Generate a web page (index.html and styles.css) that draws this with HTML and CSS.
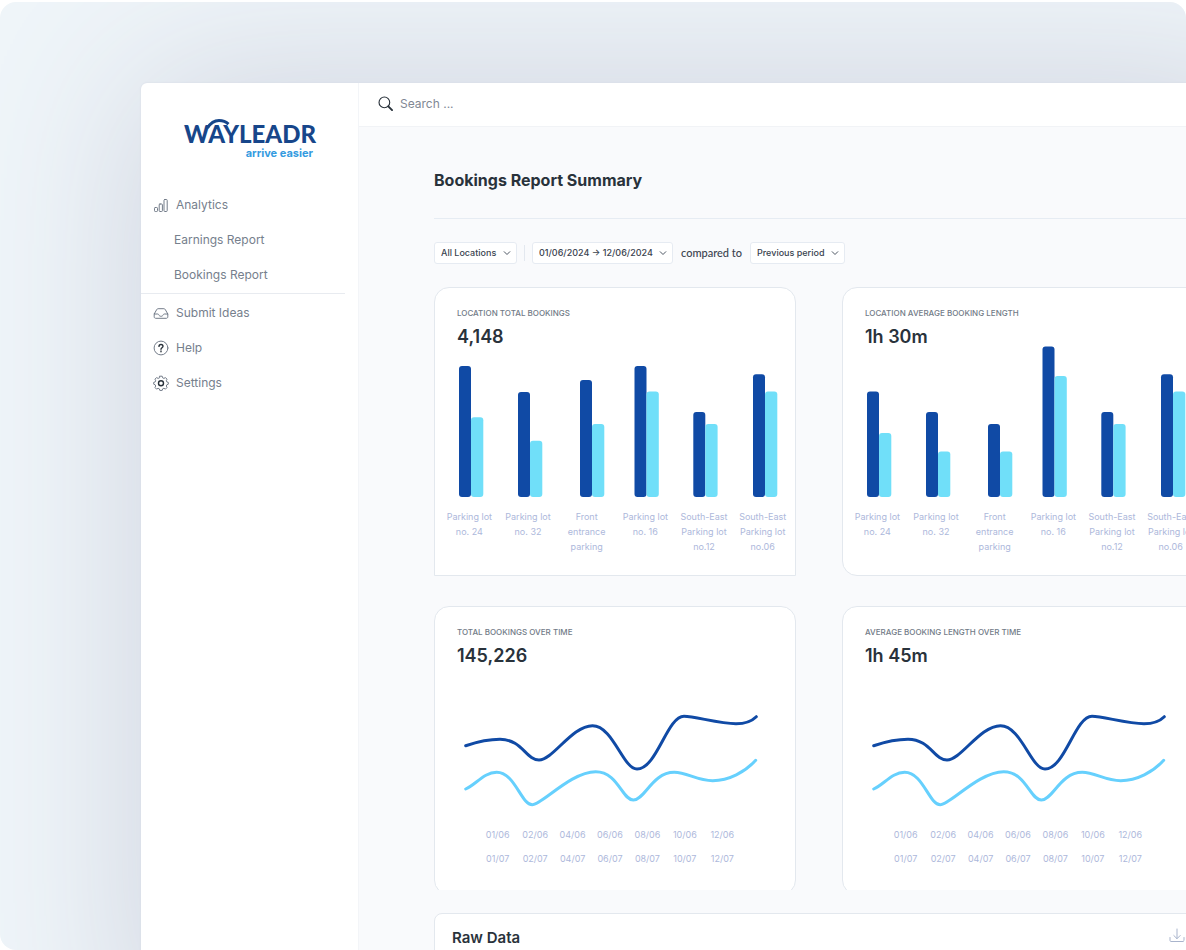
FILE: index.html
```html
<!DOCTYPE html>
<html lang="en">
<head>
<meta charset="utf-8">
<title>Wayleadr – Bookings Report Summary</title>
<link rel="stylesheet" href="styles.css">
</head>
<body>
<div class="canvas">
  <div class="app">
    <aside class="sidebar">
      <div class="logo">
        <span class="logo-name">WAYLEADR</span>
        <svg class="logo-arc" viewBox="0 0 38 26" aria-hidden="true"><path d="M6.500 10C9.500 5 13 2.500 18 2.500c4 0 7 1.200 9.500 3.600"/></svg>
        <span class="logo-tag">arrive easier</span>
      </div>
      <nav class="nav">
        <a class="nav-item" href="#">
          <svg class="icon" viewBox="0 0 16 16"><rect x="1.500" y="10.500" width="3" height="4" rx=".8"/><rect x="6.200" y="7" width="3.200" height="7.500" rx=".8"/><rect x="11" y="2.500" width="3.200" height="12" rx=".8"/></svg>
          Analytics</a>
        <a class="nav-item nav-sub" href="#">Earnings Report</a>
        <a class="nav-item nav-sub" href="#">Bookings Report</a>
        <hr class="nav-rule">
        <a class="nav-item" href="#">
          <svg class="icon" viewBox="0 0 16 16"><path d="M1.200 9v2.800c0 .9.600 1.500 1.500 1.500h10.600c.9 0 1.500-.6 1.500-1.500V9L12.300 4.600c-.3-.6-.8-.9-1.400-.9H5.100c-.6 0-1.100.3-1.400.9L1.200 9h3.500c.5 0 .8.300 1 .7.400 1 1.300 1.600 2.300 1.600s1.900-.6 2.300-1.600c.2-.4.500-.7 1-.7h3.500"/></svg>
          Submit Ideas</a>
        <a class="nav-item" href="#">
          <svg class="icon" viewBox="0 0 16 16"><circle cx="8" cy="8" r="6.900"/><path class="strong" d="M6 6.400c0-1.200.9-1.900 2-1.900s2 .7 2 1.800c0 1.400-2 1.500-2 2.900M8 11v.7"/></svg>
          Help</a>
        <a class="nav-item" href="#">
          <svg class="icon" viewBox="0 0 16 16"><path d="M6.800 1.200h2.400l.5 1.700 1.200.5 1.600-.8 1.500 1.600-.7 1.600.5 1.100 1.500.5v1.800l-1.500.6-.5 1.200.7 1.500-1.500 1.600-1.600-.8-1.200.5-.5 1.600H6.800l-.5-1.600-1.200-.5-1.600.8L2 12.500l.7-1.500-.5-1.200-1.500-.6V7.400l1.500-.5.500-1.100L2 4.200l1.500-1.600 1.600.8 1.200-.5z"/><circle class="strong" cx="8" cy="8.300" r="2.500"/></svg>
          Settings</a>
      </nav>
    </aside>

    <div class="page">
      <header class="topbar">
        <label class="search">
          <svg class="search-icon" viewBox="0 0 16 16" role="img" aria-label="Search"><circle cx="6.800" cy="6.800" r="5.700"/><path d="M11 11l4 4"/></svg>
          <input class="search-input" type="search" placeholder="Search ...">
        </label>
      </header>

      <main class="main">
        <h1 class="title">Bookings Report Summary</h1>
        <form class="filters">
          <span class="select-box">
            <select class="select" aria-label="Locations"><option>All Locations</option></select>
            <svg class="chevron" viewBox="0 0 8 8"><path d="M1.200 2.700L4 5.500l2.800-2.800"/></svg>
          </span>
          <span class="divider"></span>
          <span class="select-box">
            <select class="select" aria-label="Date range"><option>01/06/2024 → 12/06/2024</option></select>
            <svg class="chevron" viewBox="0 0 8 8"><path d="M1.200 2.700L4 5.500l2.800-2.800"/></svg>
          </span>
          <label class="compare" for="period">compared to</label>
          <span class="select-box">
            <select class="select" id="period"><option>Previous period</option></select>
            <svg class="chevron" viewBox="0 0 8 8"><path d="M1.200 2.700L4 5.500l2.800-2.800"/></svg>
          </span>
        </form>

        <div class="cards">
          <section class="card card-square">
            <h2 class="card-label">Location total bookings</h2>
            <p class="card-value">4,148</p>
            <svg class="bars" viewBox="0 0 360 152">
              <g class="now"><rect x="24" y="21" width="12" height="131" rx="3"/><rect x="83" y="47" width="12" height="105" rx="3"/><rect x="145" y="35" width="12" height="117" rx="3"/><rect x="199.500" y="21" width="12" height="131" rx="3"/><rect x="258.300" y="67" width="12" height="85" rx="3"/><rect x="318" y="29.300" width="12" height="122.700" rx="3"/></g>
              <g class="before"><rect x="36" y="72.300" width="12.300" height="79.700" rx="3"/><rect x="95" y="95.700" width="12.300" height="56.300" rx="3"/><rect x="157" y="79" width="12.300" height="73" rx="3"/><rect x="211.500" y="46.500" width="12.300" height="105.500" rx="3"/><rect x="270.300" y="79" width="12.300" height="73" rx="3"/><rect x="330" y="46.500" width="12.300" height="105.500" rx="3"/></g>
            </svg>
            <ul class="bar-labels"><li>Parking lot<br>no. 24</li><li>Parking lot<br>no. 32</li><li>Front<br>entrance<br>parking</li><li>Parking lot<br>no. 16</li><li>South-East<br>Parking lot<br>no.12</li><li>South-East<br>Parking lot<br>no.06</li></ul>
          </section>

          <section class="card">
            <h2 class="card-label">Location average booking length</h2>
            <p class="card-value">1h 30m</p>
            <svg class="bars" viewBox="0 0 360 152">
              <g class="now"><rect x="24" y="46.500" width="12" height="105.500" rx="3"/><rect x="83" y="67" width="12" height="85" rx="3"/><rect x="145" y="79" width="12" height="73" rx="3"/><rect x="199.500" y="1.500" width="12" height="150.500" rx="3"/><rect x="258.300" y="67" width="12" height="85" rx="3"/><rect x="318" y="29.300" width="12" height="122.700" rx="3"/></g>
              <g class="before"><rect x="36" y="88" width="12.300" height="64" rx="3"/><rect x="95" y="106.500" width="12.300" height="45.500" rx="3"/><rect x="157" y="106.500" width="12.300" height="45.500" rx="3"/><rect x="211.500" y="31" width="12.300" height="121" rx="3"/><rect x="270.300" y="79" width="12.300" height="73" rx="3"/><rect x="330" y="46.500" width="12.300" height="105.500" rx="3"/></g>
            </svg>
            <ul class="bar-labels"><li>Parking lot<br>no. 24</li><li>Parking lot<br>no. 32</li><li>Front<br>entrance<br>parking</li><li>Parking lot<br>no. 16</li><li>South-East<br>Parking lot<br>no.12</li><li>South-East<br>Parking lot<br>no.06</li></ul>
          </section>
        </div>

        <div class="cards cards-cut">
          <section class="card">
            <h2 class="card-label">Total bookings over time</h2>
            <p class="card-value">145,226</p>
            <svg class="lines" viewBox="0 0 360 120">
              <path class="line-now" d="M30.700 45.700C42 42 53 39.300 65 39.300C87 39.300 91 60 104 60C118 60 137 25.700 157.500 25.700C178 25.700 188 69 202 69C222 69 232 16.300 249 16.300C260 16.300 284 23.700 301 23.700C312 23.700 317 21 321.300 16.700"/>
              <path class="line-before" d="M30.700 89C41 84.500 49 72.300 61.700 72.300C80 72.300 86 104.700 97.300 104.700C107 104.700 136 71.700 160.700 71.700C183 71.700 187 100 198.300 100C210 100 217 72.300 239.300 72.300C252 72.300 262 80.700 277.700 80.700C294 80.700 310 72 320.700 60.300"/>
            </svg>
            <ul class="dates"><li>01/06</li><li>02/06</li><li>04/06</li><li>06/06</li><li>08/06</li><li>10/06</li><li>12/06</li><li>01/07</li><li>02/07</li><li>04/07</li><li>06/07</li><li>08/07</li><li>10/07</li><li>12/07</li></ul>
          </section>

          <section class="card">
            <h2 class="card-label">Average booking length over time</h2>
            <p class="card-value">1h 45m</p>
            <svg class="lines" viewBox="0 0 360 120">
              <path class="line-now" d="M30.700 45.700C42 42 53 39.300 65 39.300C87 39.300 91 60 104 60C118 60 137 25.700 157.500 25.700C178 25.700 188 69 202 69C222 69 232 16.300 249 16.300C260 16.300 284 23.700 301 23.700C312 23.700 317 21 321.300 16.700"/>
              <path class="line-before" d="M30.700 89C41 84.500 49 72.300 61.700 72.300C80 72.300 86 104.700 97.300 104.700C107 104.700 136 71.700 160.700 71.700C183 71.700 187 100 198.300 100C210 100 217 72.300 239.300 72.300C252 72.300 262 80.700 277.700 80.700C294 80.700 310 72 320.700 60.300"/>
            </svg>
            <ul class="dates"><li>01/06</li><li>02/06</li><li>04/06</li><li>06/06</li><li>08/06</li><li>10/06</li><li>12/06</li><li>01/07</li><li>02/07</li><li>04/07</li><li>06/07</li><li>08/07</li><li>10/07</li><li>12/07</li></ul>
          </section>
        </div>

        <section class="raw">
          <h2 class="raw-title">Raw Data</h2>
          <button class="download" type="button" aria-label="Download raw data">
            <svg class="download-icon" viewBox="0 0 16 16"><path d="M8 1v9.500M4.800 7.500L8 10.700l3.200-3.200M1 9.500v3c0 .6.400 1 1 1h12c.6 0 1-.4 1-1v-3"/></svg>
          </button>
        </section>
      </main>
    </div>
  </div>
</div>
</body>
</html>
```
FILE: styles.css
```css
* { box-sizing: border-box; }

body {
  margin: 0;
  background: #fff;
  font-family: Inter, "Liberation Sans", sans-serif;
  color: #29323b;
}

h1, h2, p, ul { margin: 0; padding: 0; }
ul { list-style: none; }

.canvas {
  height: calc(100vh - 2px);
  margin-top: 2px;
  padding: 81px 0 0 141px;
  border-radius: 16px;
  overflow: hidden;
  background: #eff5f9;
}

/* The dashboard runs past the right and bottom edges of the canvas. */
.app {
  display: flex;
  min-height: calc(100% + 100px);
  margin-right: -94px;
  border-radius: 6px 0 0 0;
  background: #fff;
  box-shadow: 0 0 2px #d3d9e3, 0 0 170px #ced2de;
}

.sidebar {
  flex: 0 0 218px;
  border-right: 1px solid #f3f5f8;
}

.logo {
  position: relative;
  display: flex;
  flex-direction: column;
  align-items: flex-end;
  width: 175px;
  padding-top: 38px;
  height: 104px;
}
.logo-arc {
  position: absolute;
  left: 60px;
  top: 35px;
  width: 38px;
  height: 26px;
  fill: none;
  stroke: #17468a;
  stroke-width: 3;
}
.logo-name {
  font: 900 24px/26px Lato, sans-serif;
  color: #17468a;
}
.logo-tag {
  padding-right: 3px;
  font-size: 11px;
  line-height: 12px;
  font-weight: 700;
  color: #359bdf;
}

.nav { padding-left: 12px; }
.nav-item {
  display: flex;
  align-items: center;
  gap: 7px;
  height: 35px;
  font-size: 12px;
  color: #76808d;
  text-decoration: none;
}
.nav-sub { padding-left: 21px; }
.nav-rule {
  margin: 1px 13px 1px -12px;
  border: 0;
  border-top: 1px solid #e8ebf0;
}
.icon {
  width: 16px;
  height: 16px;
  fill: none;
  stroke: #737c89;
  stroke-width: 1;
  stroke-linejoin: round;
  stroke-linecap: round;
}
.icon .strong { stroke: #29323b; stroke-width: 1.400; }

.page { flex: 1; min-width: 0; display: flex; flex-direction: column; }
.topbar {
  display: flex;
  align-items: center;
  height: 44px;
  padding: 0 0 2px 19px;
  border-bottom: 1px solid #f1f3f6;
}
.search { display: flex; align-items: center; gap: 7px; }
.search-icon {
  width: 15px;
  height: 15px;
  fill: none;
  stroke: #29323b;
  stroke-width: 1.200;
  stroke-linecap: round;
}
.search-icon path { stroke-width: 2; }
.search-input {
  padding: 0;
  border: 0;
  outline: 0;
  background: none;
  font: 12px/18px Inter, sans-serif;
  color: #29323b;
}
.search-input::placeholder { color: #818894; }

.main {
  flex: 1;
  padding: 43px 76px 0 75px;
  background: #f9fafc;
}
.title {
  padding-bottom: 28px;
  border-bottom: 1px solid #e6ecf3;
  font-size: 16px;
  line-height: 20px;
  font-weight: 700;
}

.filters {
  display: flex;
  align-items: center;
  gap: 7px;
  padding: 23px 0;
}
.select-box { position: relative; display: flex; }
.select {
  appearance: none;
  height: 22px;
  padding: 0 19px 0 6px;
  border: 1px solid #e6ebf2;
  border-radius: 3px;
  background: #fff;
  font: 500 9px/14px Inter, sans-serif;
  color: #3a434f;
}
.chevron {
  position: absolute;
  right: 6px;
  top: 7px;
  width: 8px;
  height: 8px;
  fill: none;
  stroke: #4d5663;
  stroke-linecap: round;
  pointer-events: none;
}
.divider { width: 1px; height: 16px; background: #e3e8ef; }
.compare {
  padding: 0 1px;
  font: 500 11px/16px Lato, sans-serif;
  color: #3a434f;
}

.cards {
  display: grid;
  grid-template-columns: 1fr 1fr;
  gap: 46px;
}
.card {
  height: 289px;
  padding-top: 18px;
  border: 1px solid #e3e8ee;
  border-radius: 15px;
  background: #fff;
}
.card-square { border-radius: 15px 15px 0 0; }
.cards-cut { height: 284px; margin-top: 30px; overflow: hidden; }
.card-label {
  padding-left: 22px;
  font-size: 8px;
  line-height: 14px;
  font-weight: 500;
  text-transform: uppercase;
  color: #727b87;
}
.card-value {
  padding-left: 22px;
  margin-top: 5px;
  font-size: 18px;
  line-height: 24px;
  font-weight: 600;
}
.bars { display: block; width: 100%; margin-top: -4px; }
.now { fill: #104aa5; }
.before { fill: #70dff9; }
.bar-labels {
  display: grid;
  grid-template-columns: repeat(6, 1fr);
  margin: 12px 3px 0 5px;
  font-size: 9px;
  line-height: 15px;
  text-align: center;
  color: #adb8db;
}

.lines {
  display: block;
  width: 100%;
  margin-top: 32px;
  fill: none;
  stroke-width: 3;
  stroke-linecap: round;
}
.line-now { stroke: #104aa5; }
.line-before { stroke: #66d0fd; }
.dates {
  display: grid;
  grid-template-columns: repeat(7, 1fr);
  row-gap: 10px;
  margin: 8px 54px 0 44px;
  font-size: 9px;
  line-height: 14px;
  text-align: center;
  color: #adb8db;
}

.raw {
  display: flex;
  justify-content: space-between;
  align-items: flex-start;
  margin-top: 23px;
  padding: 12px 18px 40px 17px;
  border: 1px solid #e3e8ee;
  border-radius: 8px;
  background: #fff;
}
.raw-title { font-size: 15px; line-height: 24px; font-weight: 600; }
.download { padding: 2px 0; border: 0; background: none; }
.download-icon {
  display: block;
  width: 16px;
  height: 16px;
  fill: none;
  stroke: #a9b4cc;
  stroke-linecap: round;
  stroke-linejoin: round;
}
```
